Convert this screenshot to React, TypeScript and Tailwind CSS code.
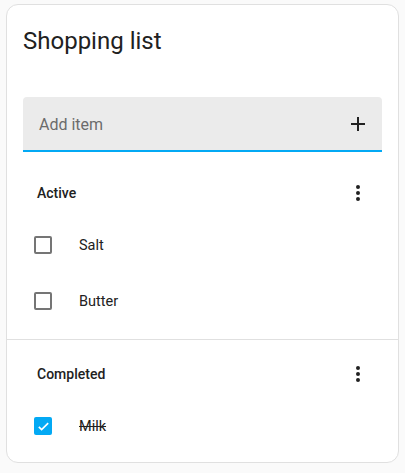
import React from "react";

type Item = { name: string; done: boolean };

const active: Item[] = [
  { name: "Salt", done: false },
  { name: "Butter", done: false },
];
const completed: Item[] = [{ name: "Milk", done: true }];

function Dots() {
  return (
    <svg viewBox="0 0 24 24" className="w-6 h-6 fill-[#212121]">
      <path d="M12,16A2,2 0 0,1 14,18A2,2 0 0,1 12,20A2,2 0 0,1 10,18A2,2 0 0,1 12,16M12,10A2,2 0 0,1 14,12A2,2 0 0,1 12,14A2,2 0 0,1 10,12A2,2 0 0,1 12,10M12,4A2,2 0 0,1 14,6A2,2 0 0,1 12,8A2,2 0 0,1 10,6A2,2 0 0,1 12,4Z" />
    </svg>
  );
}

function Check({ on }: { on: boolean }) {
  if (on) {
    return (
      <div className="w-[18px] h-[18px] rounded-[2px] bg-[#03a9f4] flex items-center justify-center">
        <svg viewBox="0 0 24 24" className="w-[15px] h-[15px]">
          <path d="M4.5 12.5l4.5 4.5L19.5 6.5" fill="none" stroke="white" strokeWidth="2.6" />
        </svg>
      </div>
    );
  }
  return <div className="w-[18px] h-[18px] rounded-[2px] border-2 border-[#757575]" />;
}

function Row({ item }: { item: Item }) {
  return (
    <div className="h-14 flex items-center pl-[27px]">
      <Check on={item.done} />
      <span
        className={
          "ml-[27px] pt-[2px] text-[14.5px] text-[#212121] " + (item.done ? "line-through" : "")
        }
      >
        {item.name}
      </span>
    </div>
  );
}

function Section({ title }: { title: string }) {
  return (
    <div className="h-12 flex items-center justify-between pl-[30px] pr-[28px]">
      <span className="text-[14px] font-medium text-[#212121]">{title}</span>
      <Dots />
    </div>
  );
}

export default function App() {
  return (
    <div className="min-h-screen bg-[#fafafa] font-['Roboto',sans-serif] pt-1 px-[6px]">
      <div className="w-[393px] bg-white border border-[#e0e0e0] rounded-xl pb-2">
        <h1 className="px-4 pt-3 text-2xl leading-[48px] text-[#212121]">
          Shopping list
        </h1>
        <div className="mx-4 mt-8 h-[55px] bg-[#ebebeb] rounded-t border-b-2 border-[#03a9f4] flex items-center justify-between pl-4 pr-3">
          <span className="pt-[3px] text-base text-[#6b6b6b]">Add item</span>
          <svg viewBox="0 0 24 24" className="w-6 h-6 fill-[#212121]">
            <path d="M19,13H13V19H11V13H5V11H11V5H13V11H19V13Z" />
          </svg>
        </div>
        <div className="mt-[17px]">
          <Section title="Active" />
          {active.map((i) => (
            <Row key={i.name} item={i} />
          ))}
        </div>
        <div className="mt-[10px] border-t border-[#e0e0e0] pt-[10px]">
          <Section title="Completed" />
          {completed.map((i) => (
            <Row key={i.name} item={i} />
          ))}
        </div>
      </div>
    </div>
  );
}
